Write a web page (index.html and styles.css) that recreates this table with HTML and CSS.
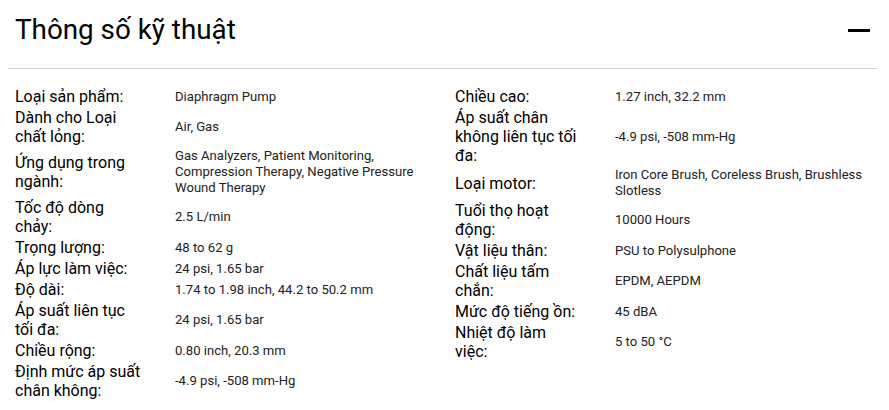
FILE: index.html
```html
<!DOCTYPE html>
<html lang="vi">
<head>
<meta charset="utf-8">
<title>Thông số kỹ thuật</title>
<link rel="stylesheet" href="styles.css">
</head>
<body>
<section class="specs">
  <header class="specs-head">
    <h2 class="specs-title">Thông số kỹ thuật</h2>
    <button class="collapse" aria-label="Thu gọn"><span class="minus"></span></button>
  </header>
  <div class="specs-body">
    <dl class="col col-left">
      <div class="row"><dt>Loại sản phẩm:</dt><dd>Diaphragm Pump</dd></div>
      <div class="row"><dt>Dành cho Loại chất lỏng:</dt><dd>Air, Gas</dd></div>
      <div class="row"><dt>Ứng dụng trong ngành:</dt><dd>Gas Analyzers, Patient Monitoring, Compression Therapy, Negative Pressure Wound Therapy</dd></div>
      <div class="row"><dt>Tốc độ dòng chảy:</dt><dd>2.5 L/min</dd></div>
      <div class="row"><dt>Trọng lượng:</dt><dd>48 to 62 g</dd></div>
      <div class="row"><dt>Áp lực làm việc:</dt><dd>24 psi, 1.65 bar</dd></div>
      <div class="row"><dt>Độ dài:</dt><dd>1.74 to 1.98 inch, 44.2 to 50.2 mm</dd></div>
      <div class="row"><dt>Áp suất liên tục tối đa:</dt><dd>24 psi, 1.65 bar</dd></div>
      <div class="row"><dt>Chiều rộng:</dt><dd>0.80 inch, 20.3 mm</dd></div>
      <div class="row"><dt>Định mức áp suất chân không:</dt><dd>-4.9 psi, -508 mm-Hg</dd></div>
    </dl>
    <dl class="col col-right">
      <div class="row"><dt>Chiều cao:</dt><dd>1.27 inch, 32.2 mm</dd></div>
      <div class="row"><dt>Áp suất chân không liên tục tối đa:</dt><dd>-4.9 psi, -508 mm-Hg</dd></div>
      <div class="row"><dt>Loại motor:</dt><dd>Iron Core Brush, Coreless Brush, Brushless Slotless</dd></div>
      <div class="row"><dt>Tuổi thọ hoạt động:</dt><dd>10000 Hours</dd></div>
      <div class="row"><dt>Vật liệu thân:</dt><dd>PSU to Polysulphone</dd></div>
      <div class="row"><dt>Chất liệu tấm chắn:</dt><dd>EPDM, AEPDM</dd></div>
      <div class="row"><dt>Mức độ tiếng ồn:</dt><dd>45 dBA</dd></div>
      <div class="row"><dt>Nhiệt độ làm việc:</dt><dd>5 to 50 °C</dd></div>
    </dl>
  </div>
</section>
</body>
</html>
```

FILE: styles.css
```css
* { box-sizing: border-box; }
html, body { margin: 0; background: #fff; }
body {
  padding: 0 8px;
  font-family: Roboto, "Noto Sans", sans-serif;
  color: #111;
}
.specs { width: 869px; }
.specs-head {
  display: flex;
  align-items: center;
  justify-content: space-between;
  height: 69px;
  padding: 0 7px 8px 7px;
  border-bottom: 1px solid #d4d4d8;
}
.specs-title {
  margin: 0;
  font-size: 27.8px;
  font-weight: 400;
  color: #000;
  line-height: 36px;
}
.collapse {
  border: 0;
  background: none;
  padding: 0;
  width: 22px;
  height: 22px;
  display: flex;
  align-items: center;
  cursor: pointer;
}
.minus { display: block; width: 22px; height: 3px; background: #000; }
.specs-body {
  display: grid;
  grid-template-columns: 440px 1fr;
  padding: 17px 0 0 7px;
}
.col { margin: 0; }
.col-left { padding-right: 15px; }
.row {
  display: grid;
  grid-template-columns: 126px 1fr;
  column-gap: 34px;
  align-items: center;
  padding: 1px 0;
}
dt {
  font-size: 16px;
  line-height: 19px;
  color: #000;
}
dd {
  margin: 0;
  font-size: 13.1px;
  line-height: 16px;
  color: #222;
}
```
